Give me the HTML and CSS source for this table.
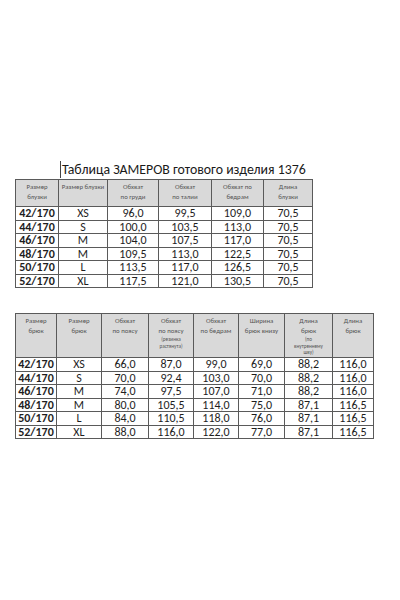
FILE: index.html
```html
<!DOCTYPE html>
<html lang="ru">
<head>
<meta charset="utf-8">
<link rel="stylesheet" href="styles.css">
</head>
<body>
<div class="page">
  <div class="title"><span class="cursor"></span>Таблица ЗАМЕРОВ готового изделия 1376</div>
  <table class="grid t1">
    <colgroup>
      <col style="width:43px"><col style="width:49px"><col style="width:51px"><col style="width:53px"><col style="width:52px"><col style="width:49px">
    </colgroup>
    <thead>
      <tr>
        <th>Размер<br>блузки</th>
        <th>Размер блузки</th>
        <th>Обхват<br>по груди</th>
        <th>Обхват<br>по талии</th>
        <th>Обхват по<br>бедрам</th>
        <th>Длина<br>блузки</th>
      </tr>
    </thead>
    <tbody>
      <tr><td class="size">42/170</td><td>XS</td><td>96,0</td><td>99,5</td><td>109,0</td><td>70,5</td></tr>
      <tr><td class="size">44/170</td><td>S</td><td>100,0</td><td>103,5</td><td>113,0</td><td>70,5</td></tr>
      <tr><td class="size">46/170</td><td>M</td><td>104,0</td><td>107,5</td><td>117,0</td><td>70,5</td></tr>
      <tr><td class="size">48/170</td><td>M</td><td>109,5</td><td>113,0</td><td>122,5</td><td>70,5</td></tr>
      <tr><td class="size">50/170</td><td>L</td><td>113,5</td><td>117,0</td><td>126,5</td><td>70,5</td></tr>
      <tr><td class="size">52/170</td><td>XL</td><td>117,5</td><td>121,0</td><td>130,5</td><td>70,5</td></tr>
    </tbody>
  </table>
  <table class="grid t2">
    <colgroup>
      <col style="width:41px"><col style="width:45px"><col style="width:47px"><col style="width:45px"><col style="width:45px"><col style="width:46px"><col style="width:48px"><col style="width:41px">
    </colgroup>
    <thead>
      <tr>
        <th>Размер<br>брюк</th>
        <th>Размер<br>брюк</th>
        <th>Обхват<br>по поясу</th>
        <th>Обхват<br>по поясу<br><span class="note">(резинка<br>растянута)</span></th>
        <th>Обхват<br>по бедрам</th>
        <th>Ширина<br>брюк внизу</th>
        <th>Длина<br>брюк<br><span class="note">(по<br>внутреннему<br>шву)</span></th>
        <th>Длина<br>брюк</th>
      </tr>
    </thead>
    <tbody>
      <tr><td class="size">42/170</td><td>XS</td><td>66,0</td><td>87,0</td><td>99,0</td><td>69,0</td><td>88,2</td><td>116,0</td></tr>
      <tr><td class="size">44/170</td><td>S</td><td>70,0</td><td>92,4</td><td>103,0</td><td>70,0</td><td>88,2</td><td>116,0</td></tr>
      <tr><td class="size">46/170</td><td>M</td><td>74,0</td><td>97,5</td><td>107,0</td><td>71,0</td><td>88,2</td><td>116,0</td></tr>
      <tr><td class="size">48/170</td><td>M</td><td>80,0</td><td>105,5</td><td>114,0</td><td>75,0</td><td>87,1</td><td>116,5</td></tr>
      <tr><td class="size">50/170</td><td>L</td><td>84,0</td><td>110,5</td><td>118,0</td><td>76,0</td><td>87,1</td><td>116,5</td></tr>
      <tr><td class="size">52/170</td><td>XL</td><td>88,0</td><td>116,0</td><td>122,0</td><td>77,0</td><td>87,1</td><td>116,5</td></tr>
    </tbody>
  </table>
</div>
</body>
</html>
```
FILE: styles.css
```css
html, body {
  margin: 0;
  padding: 0;
  background: #ffffff;
}
body {
  font-family: Carlito, "Open Sans", "Noto Sans", sans-serif;
  color: #1e1e1e;
}
.page {
  padding: 160px 0 0 15px;
}
.title {
  display: flex;
  align-items: center;
  height: 19px;
  margin-left: 45px;
  font-size: 13.8px;
  line-height: 17px;
  color: #1a1a1a;
}
.cursor {
  display: inline-block;
  width: 1px;
  height: 17px;
  background: #444;
  margin-right: 1px;
}
.grid {
  border-collapse: collapse;
  table-layout: fixed;
}
.grid th, .grid td {
  border: 1px solid #5a5a5a;
  padding: 0;
  text-align: center;
}
.grid th {
  background: #d9d9d9;
  color: #555555;
  font-weight: normal;
  font-size: 6.8px;
  line-height: 10px;
  vertical-align: top;
  padding-top: 2px;
  white-space: nowrap;
}
.grid td {
  height: 12.5px;
  font-size: 12px;
  line-height: 12px;
  color: #1e1e1e;
}
.grid td.size {
  font-weight: bold;
}
.t1 {
  width: 297px;
}
.t1 thead tr {
  height: 27px;
}
.t2 {
  width: 358px;
  margin-top: 25px;
}
.t2 thead tr {
  height: 40px;
}
.note {
  font-size: 5.2px;
  line-height: 6.5px;
  display: inline-block;
}
```
